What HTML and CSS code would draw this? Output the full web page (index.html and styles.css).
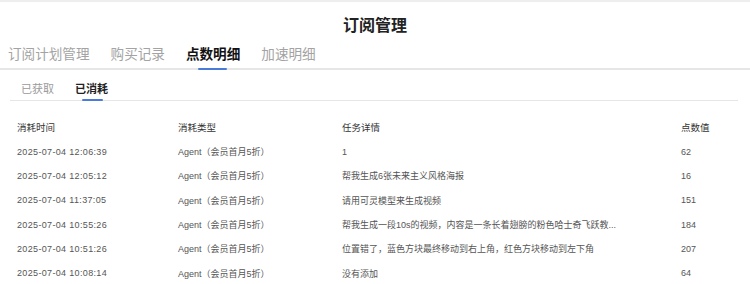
FILE: index.html
```html
<!DOCTYPE html>
<html lang="zh-CN">
<head>
  <meta charset="UTF-8">
  <meta name="viewport" content="width=device-width, initial-scale=1.0">
  <title>订阅管理</title>
  <link rel="stylesheet" href="styles.css">
</head>
<body>
  <div class="page">
    <h1 class="page-title">订阅管理</h1>

    <!-- Main tabs -->
    <nav class="tabs">
      <a class="tab">订阅计划管理</a>
      <a class="tab">购买记录</a>
      <a class="tab active">点数明细</a>
      <a class="tab">加速明细</a>
    </nav>

    <!-- Sub tabs -->
    <nav class="sub-tabs">
      <a class="sub-tab">已获取</a>
      <a class="sub-tab active">已消耗</a>
    </nav>

    <div class="records">
      <div class="row head">
        <span>消耗时间</span>
        <span>消耗类型</span>
        <span>任务详情</span>
        <span>点数值</span>
      </div>
      <div class="row">
        <span class="time">2025-07-04 12:06:39</span>
        <span>Agent（会员首月5折）</span>
        <span>1</span>
        <span>62</span>
      </div>
      <div class="row">
        <span class="time">2025-07-04 12:05:12</span>
        <span>Agent（会员首月5折）</span>
        <span>帮我生成6张未来主义风格海报</span>
        <span>16</span>
      </div>
      <div class="row">
        <span class="time">2025-07-04 11:37:05</span>
        <span>Agent（会员首月5折）</span>
        <span>请用可灵模型来生成视频</span>
        <span>151</span>
      </div>
      <div class="row">
        <span class="time">2025-07-04 10:55:26</span>
        <span>Agent（会员首月5折）</span>
        <span>帮我生成一段10s的视频，内容是一条长着翅膀的粉色哈士奇飞跃教...</span>
        <span>184</span>
      </div>
      <div class="row">
        <span class="time">2025-07-04 10:51:26</span>
        <span>Agent（会员首月5折）</span>
        <span>位置错了，蓝色方块最终移动到右上角，红色方块移动到左下角</span>
        <span>207</span>
      </div>
      <div class="row">
        <span class="time">2025-07-04 10:08:14</span>
        <span>Agent（会员首月5折）</span>
        <span>没有添加</span>
        <span>64</span>
      </div>
    </div>
  </div>
</body>
</html>
```

FILE: styles.css
```css
body {
  margin: 0;
  padding: 0;
  background-color: #fff;
  font-family: "Liberation Sans", "Noto Sans CJK SC", sans-serif;
  color: #333;
}

.page {
  border-top: 2px solid #eee;
  height: 282px;
  overflow: hidden;
}

.page-title {
  margin: 0;
  padding-top: 12px;
  text-align: center;
  font-size: 16px;
  line-height: 24px;
  font-weight: bold;
  color: #222;
}

/* Main tabs */
.tabs {
  display: flex;
  gap: 21px;
  margin-top: 7px;
  padding-left: 8px;
  border-bottom: 2px solid #e6e6e6;
}

.tab {
  position: relative;
  font-size: 13.6px;
  line-height: 20px;
  padding-bottom: 3px;
  color: #a3a3a3;
}

.tab.active {
  color: #111;
  font-weight: bold;
}

.tab.active::after {
  content: "";
  position: absolute;
  left: 50%;
  bottom: -2px;
  width: 29px;
  height: 2px;
  margin-left: -15px;
  background-color: #4a7bd8;
  border-radius: 1px;
}

/* Sub tabs */
.sub-tabs {
  display: flex;
  gap: 21px;
  margin: 0 12px 0 10px;
  padding: 10px 0 2px 11px;
  border-bottom: 1px solid #e6e6e6;
}

.sub-tab {
  position: relative;
  font-size: 11px;
  line-height: 18px;
  color: #9a9a9a;
}

.sub-tab.active {
  color: #222;
  font-weight: bold;
}

.sub-tab.active::after {
  content: "";
  position: absolute;
  left: 50%;
  bottom: -3px;
  width: 21px;
  height: 2px;
  margin-left: -10px;
  background-color: #4a7bd8;
  border-radius: 1px;
}

/* Records table */
.records {
  margin: 14px 0 0 17px;
}

.row {
  display: grid;
  grid-template-columns: 161px 164px 339px 1fr;
  height: 24.35px;
  align-items: center;
  font-size: 9px;
  color: #555;
  white-space: nowrap;
}

.row .time {
  letter-spacing: 0.34px;
}

.row.head {
  font-size: 9.5px;
  color: #333;
}
```
